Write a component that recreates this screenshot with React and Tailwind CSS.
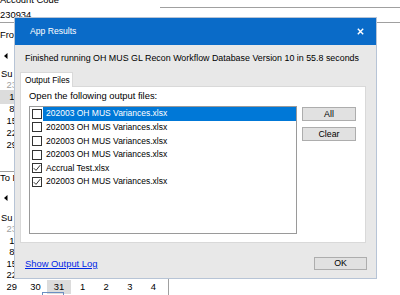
import React from "react";

const font = { fontFamily: '"Liberation Sans", Arial, sans-serif' };

const weeks = [
  [["23", 1], ["24", 1], ["25", 1], ["26", 1], ["27", 1], ["28", 1], ["29", 1]],
  [["1"], ["2"], ["3"], ["4"], ["5"], ["6"], ["7"]],
  [["8"], ["9"], ["10"], ["11"], ["12"], ["13"], ["14"]],
  [["15"], ["16"], ["17"], ["18"], ["19"], ["20"], ["21"]],
  [["22"], ["23"], ["24"], ["25"], ["26"], ["27"], ["28"]],
  [["29"], ["30"], ["31"], ["1"], ["2"], ["3"], ["4"]],
];
const dayNames = ["Su", "Mo", "Tu", "We", "Th", "Fr", "Sa"];

// only what shows beside / below the dialog gets its text
function Calendar({ selected, rowH, headH, navGap, openRows, today }) {
  return (
    <div className="w-[169px] border-r border-[#a0a0a0]">
      <div className={`flex items-center h-[12px] ${navGap}`}>
        <svg width="8" height="8" viewBox="0 0 8 8" className="ml-[2px]">
          <path d="M5.5 1 L2 4 L5.5 7 Z" fill="#000" />
        </svg>
      </div>
      <div className={`grid grid-cols-[repeat(7,23.6px)] ${headH} items-center`}>
        {dayNames.map((d, j) => (
          <div key={d} className="pl-[1px]">{j === 0 ? d : ""}</div>
        ))}
      </div>
      {weeks.map((w, i) => (
        <div key={i} className={`grid grid-cols-[repeat(7,23.6px)] ${rowH}`}>
          {w.map(([d, gray], j) => {
            const sel = selected[0] === i && selected[1] === j;
            const shown = j === 0 || openRows.includes(i);
            return (
              <div
                key={j}
                className={`flex items-center justify-center ${gray ? "text-[#a0a0a0]" : "text-black"} ${
                  sel ? "bg-[#dcdcdc]" : ""
                }`}
              >
                {shown ? d : ""}
              </div>
            );
          })}
        </div>
      ))}
      {today && (
        <div className="flex items-start h-[12px] pt-[1px]">
          <div className="ml-[42px] w-[22px] h-[12px] border border-[#6b8fc2]" />
          <div className="ml-[5px] font-bold whitespace-nowrap">Today: 3/31/2020</div>
        </div>
      )}
    </div>
  );
}

const files = [
  { name: "202003 OH MUS Variances.xlsx", checked: false, sel: true },
  { name: "202003 OH MUS Variances.xlsx", checked: false },
  { name: "202003 OH MUS Variances.xlsx", checked: false },
  { name: "202003 OH MUS Variances.xlsx", checked: false },
  { name: "Accrual Test.xlsx", checked: true },
  { name: "202003 OH MUS Variances.xlsx", checked: true },
];

function Check({ checked }) {
  return (
    <div className="w-[10px] h-[10px] border border-[#333333] bg-white flex items-center justify-center shrink-0">
      {checked && (
        <svg width="8" height="8" viewBox="0 0 8 8">
          <path d="M0.8 4.2 L3 6.4 L7.2 1.2" fill="none" stroke="#333" strokeWidth="1" />
        </svg>
      )}
    </div>
  );
}

function Dialog() {
  return (
    <div className="absolute left-[14px] top-[17px] w-[363px] h-[262px] border border-[#b7c4d6] flex flex-col bg-[#e8e8e8] whitespace-nowrap">
      <div className="h-[27px] bg-[#0a6bc8] flex items-center justify-between pl-[15px] pr-[12px] text-white">
        <span className="text-[8.6px]">App Results</span>
        <svg width="7" height="7" viewBox="0 0 7 7">
          <path d="M0.8 0.8 L6.2 6.2 M6.2 0.8 L0.8 6.2" stroke="#fff" strokeWidth="1.4" />
        </svg>
      </div>
      <div className="pl-[10px] pt-[7px] leading-[12px] text-[8.9px]">
        Finished running OH MUS GL Recon Workflow Database Version 10 in 55.8 seconds
      </div>
      <div className="mt-[8px] ml-[5px] flex">
        <div className="h-[15px] w-[53px] bg-white border border-b-0 border-[#d9d9d9] pl-[4px] leading-[14px] -mb-[1px] relative text-[8.3px]">
          Output Files
        </div>
      </div>
      <div className="ml-[5px] w-[346px] h-[157px] bg-white border border-[#d9d9d9] flex flex-col">
        <div className="pl-[8px] pt-[3px] leading-[12px]">Open the following output files:</div>
        <div className="flex mt-[4px] ml-[8px] gap-[5px]">
          <div className="w-[268px] h-[128px] border border-[#9a9a9a] bg-white flex flex-col text-[8.5px]">
            {files.map((f, i) => (
              <div key={i} className="h-[13.6px] flex items-center pl-[2px]">
                <Check checked={f.checked} />
                <div
                  className={`ml-[1px] flex-1 h-full flex items-center pl-[3px] ${
                    f.sel ? "bg-[#0078d7] text-white" : ""
                  }`}
                >
                  {f.name}
                </div>
              </div>
            ))}
          </div>
          <div className="flex flex-col gap-[6px] mt-[1px] text-[8.8px]">
            <button className="w-[54px] h-[14px] bg-[#e1e1e1] border border-[#adadad] leading-[12px]">All</button>
            <button className="w-[54px] h-[14px] bg-[#e1e1e1] border border-[#adadad] leading-[12px]">Clear</button>
          </div>
        </div>
      </div>
      <div className="flex items-center justify-between mt-[13px] pl-[10px] pr-[9px]">
        <a className="text-[#0026e6] underline leading-[12px] mt-[2px]">Show Output Log</a>
        <button className="w-[53px] h-[13px] bg-[#e1e1e1] border border-[#adadad] leading-[11px] text-[8.8px]">OK</button>
      </div>
    </div>
  );
}

export default function App() {
  return (
    <div className="relative w-[400px] h-[295px] overflow-hidden bg-white text-black text-[9.4px]" style={font}>
      <div className="h-[7px] flex items-end">
        <div className="h-[12px] leading-[12px] mb-[1px] shrink-0">Account Code</div>
      </div>
      <div className="h-[1px] ml-[160px] bg-[#a0a0a0]" />
      <div className="h-[15px] border-b border-[#a0a0a0] flex items-center">230934</div>
      <div className="mt-[6px] leading-[12px]">From</div>
      <Calendar selected={[1, 0]} navGap="mt-[9px]" headH="h-[16px] pt-[5px]" rowH="h-[12px]" openRows={[]} />
      <div className="h-[21px]" />
      <div className="border-t border-[#a0a0a0] w-[169px] leading-[12px]">To D</div>
      <Calendar
        selected={[5, 2]}
        navGap="mt-[8px]"
        headH="h-[18px] pt-[7px]"
        rowH="h-[11.5px]"
        openRows={[5]}
        today
      />
      <Dialog />
    </div>
  );
}
